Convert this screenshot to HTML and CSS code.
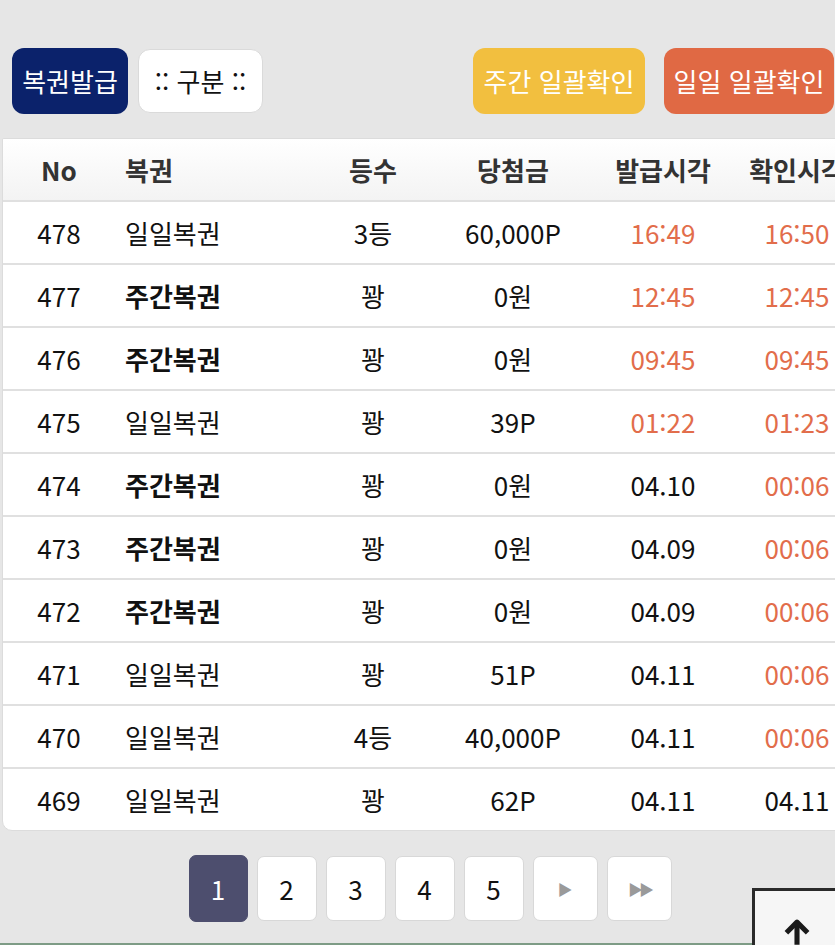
FILE: index.html
```html
<!DOCTYPE html>
<html lang="ko">
<head>
  <meta charset="UTF-8" />
  <title>복권 내역</title>
  <link rel="stylesheet" href="styles.css">
</head>
<body>

  <div class="page">
    <!-- Top buttons -->
    <div class="toolbar">
      <div class="btn-group">
        <button class="btn btn-navy">복권발급</button>
        <button class="btn btn-white">:: 구분 ::</button>
      </div>
      <div class="btn-group">
        <button class="btn btn-yellow">주간 일괄확인</button>
        <button class="btn btn-orange">일일 일괄확인</button>
      </div>
    </div>

    <!-- Lottery list -->
    <table class="lotto-table">
      <colgroup>
        <col class="c-no">
        <col class="c-type">
        <col class="c-rank">
        <col class="c-prize">
        <col class="c-issued">
        <col class="c-checked">
      </colgroup>
      <thead>
        <tr>
          <th>No</th>
          <th class="left">복권</th>
          <th>등수</th>
          <th>당첨금</th>
          <th>발급시각</th>
          <th>확인시각</th>
        </tr>
      </thead>
      <tbody id="rows"></tbody>
    </table>

    <!-- Pagination -->
    <div class="pager">
      <a class="page-btn active">1</a>
      <a class="page-btn">2</a>
      <a class="page-btn">3</a>
      <a class="page-btn">4</a>
      <a class="page-btn">5</a>
      <a class="page-btn wide arrow">&#9654;</a>
      <a class="page-btn wide arrow double">&#9654;&#9654;</a>
    </div>
  </div>

  <div class="bottom-line"></div>

  <a class="to-top">
    <svg width="34" height="34" viewBox="0 0 24 24">
      <path d="M12 21V6" stroke="#1a1a1a" stroke-width="3.6" fill="none"/>
      <path d="M4.5 12.5L12 5l7.5 7.5" stroke="#1a1a1a" stroke-width="3.6" fill="none" stroke-linejoin="round"/>
    </svg>
  </a>

  <script>
    const rows = [
      [478, '일일복권', false, '3등', '60,000P', '16:49', true, '16:50', true],
      [477, '주간복권', true, '꽝', '0원', '12:45', true, '12:45', true],
      [476, '주간복권', true, '꽝', '0원', '09:45', true, '09:45', true],
      [475, '일일복권', false, '꽝', '39P', '01:22', true, '01:23', true],
      [474, '주간복권', true, '꽝', '0원', '04.10', false, '00:06', true],
      [473, '주간복권', true, '꽝', '0원', '04.09', false, '00:06', true],
      [472, '주간복권', true, '꽝', '0원', '04.09', false, '00:06', true],
      [471, '일일복권', false, '꽝', '51P', '04.11', false, '00:06', true],
      [470, '일일복권', false, '4등', '40,000P', '04.11', false, '00:06', true],
      [469, '일일복권', false, '꽝', '62P', '04.11', false, '04.11', false]
    ];

    const tbody = document.getElementById('rows');
    rows.forEach(r => {
      const tr = document.createElement('tr');
      tr.innerHTML = `
        <td>${r[0]}</td>
        <td class="left ${r[2] ? 'bold' : ''}">${r[1]}</td>
        <td>${r[3]}</td>
        <td>${r[4]}</td>
        <td class="${r[6] ? 'time' : ''}">${r[5]}</td>
        <td class="${r[8] ? 'time' : ''}">${r[7]}</td>`;
      tbody.appendChild(tr);
    });
  </script>
</body>
</html>
```

FILE: styles.css
```css
html, body {
  margin: 0;
  overflow: hidden;
}

body {
  font-family: "Noto Sans CJK KR", "Noto Sans", sans-serif;
  background: #e6e6e6;
  color: #111;
}

.page {
  width: 860px;
  padding-top: 48px;
}

.toolbar {
  display: flex;
  justify-content: space-between;
  align-items: center;
  padding: 0 26px 0 12px;
  height: 66px;
}

.btn-group {
  display: flex;
  align-items: center;
  gap: 10px;
}

.btn {
  font-family: inherit;
  font-size: 26px;
  line-height: 1;
  border: none;
  border-radius: 12px;
  height: 66px;
  padding: 0;
  color: #fff;
  cursor: pointer;
}

.btn-navy { background: #0b226b; width: 116px; }

.btn-white {
  background: #fff;
  color: #111;
  border: 1px solid #dadada;
  height: 64px;
  width: 125px;
}

.btn-yellow { background: #f2bf3f; width: 172px; margin-right: 9px; }
.btn-orange { background: #e06944; width: 170px; }

.lotto-table {
  margin: 24px 0 0 2px;
  width: 858px;
  table-layout: fixed;
  border-collapse: separate;
  border-spacing: 0;
  background: #fff;
  border: 1px solid #dcdcdc;
  border-radius: 2px 2px 10px 10px;
  overflow: hidden;
  font-size: 26px;
}

.c-no { width: 112px; }
.c-type { width: 198px; }
.c-rank { width: 120px; }
.c-prize { width: 160px; }
.c-issued { width: 140px; }
.c-checked { width: 128px; }

.lotto-table th,
.lotto-table td {
  height: 61px;
  padding: 0;
  text-align: center;
  white-space: nowrap;
  border-bottom: 2px solid #e0e0e0;
}

.lotto-table th {
  font-weight: bold;
  color: #333;
  background: linear-gradient(to bottom, #ffffff, #f3f3f3);
}

.lotto-table tbody tr:last-child td { border-bottom: none; }

.lotto-table .left {
  text-align: left;
  padding-left: 10px;
}

.lotto-table .bold { font-weight: bold; }

.lotto-table .time { color: #e26d4b; }

.pager {
  display: flex;
  justify-content: center;
  align-items: center;
  gap: 9px;
  margin-top: 24px;
}

.page-btn {
  box-sizing: border-box;
  width: 60px;
  height: 65px;
  display: flex;
  align-items: center;
  justify-content: center;
  background: #fff;
  border: 1px solid #d8d8d8;
  border-radius: 7px;
  font-size: 26px;
  color: #111;
}

.page-btn.active {
  background: #4d4e6e;
  border-color: #4d4e6e;
  color: #fff;
  width: 59px;
  height: 67px;
}

.page-btn.wide { width: 65px; }

.arrow {
  color: #9a9a9a;
  font-size: 15px;
}

.double { letter-spacing: -4px; }

.bottom-line {
  position: fixed;
  left: 0;
  right: 0;
  bottom: 0;
  height: 2px;
  background: #7e9c86;
}

.to-top {
  position: fixed;
  left: 752px;
  top: 888px;
  width: 90px;
  height: 90px;
  box-sizing: border-box;
  border: 3px solid #2a2a2a;
  background: #f6f6f6;
  display: flex;
  justify-content: center;
  padding-top: 24px;
}
```
